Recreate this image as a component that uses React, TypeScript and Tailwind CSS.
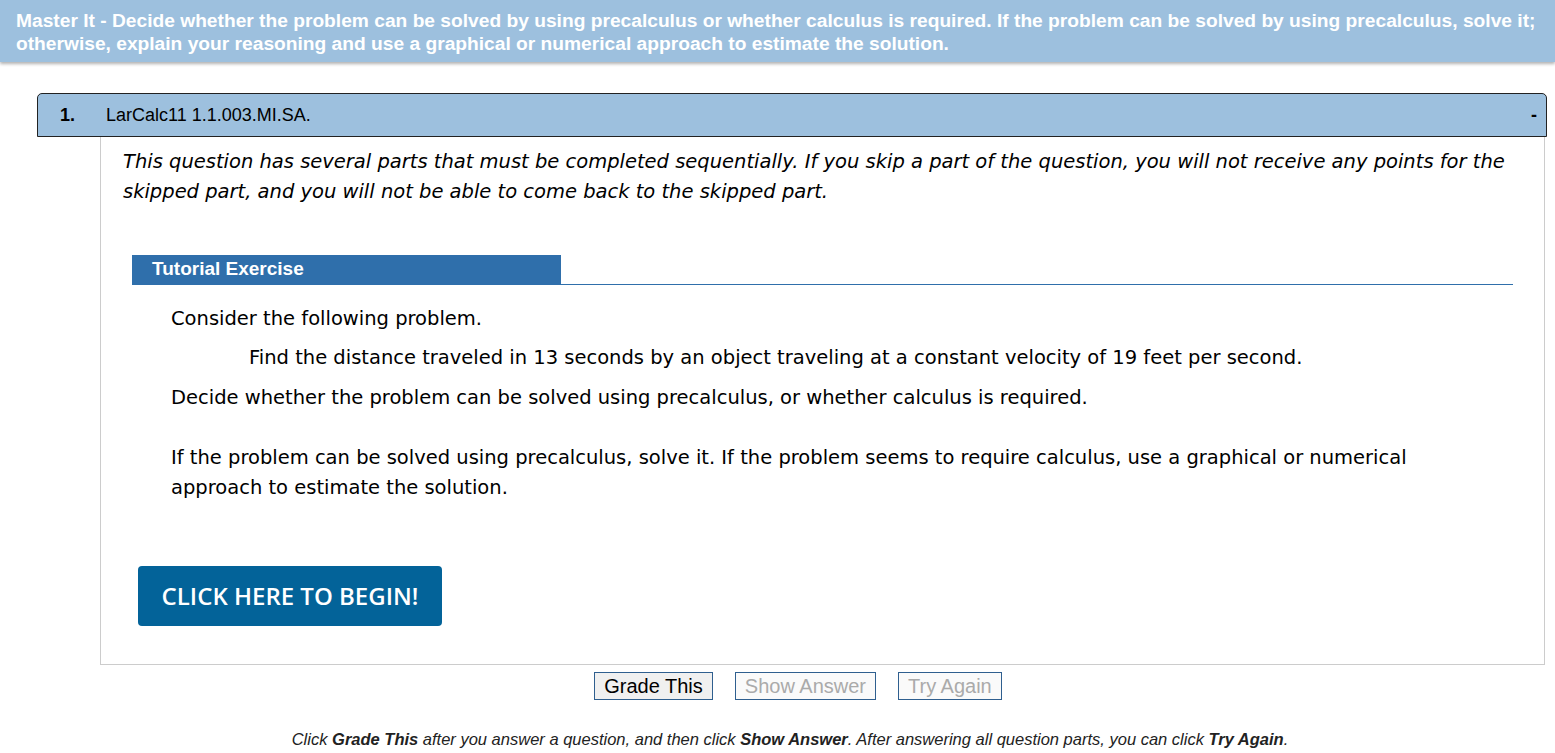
export default function App() {
  const arial = { fontFamily: '"Liberation Sans", Arial, sans-serif' };
  const verdana = { fontFamily: '"DejaVu Sans", Verdana, sans-serif' };
  return (
    <div className="min-h-[753px] bg-white text-black" style={arial}>
      <div className="bg-[#9dc0de] px-4 pt-[9px] pb-[7px] shadow-[0_2px_3px_rgba(0,0,0,0.3)]">
        <p className="text-[19.2px] font-bold leading-[23px] text-white">
          Master It - Decide whether the problem can be solved by using precalculus or whether calculus is required. If the problem can be solved by using precalculus, solve it; otherwise, explain your reasoning and use a graphical or numerical approach to estimate the solution.
        </p>
      </div>

      <div className="ml-[37px] mr-[8px] mt-[31px]">
        <div className="flex h-[44px] items-center rounded-tl-[5px] rounded-tr-[5px] border border-[#222] bg-[#9dc0de] text-[18px]">
          <span className="ml-[22px] w-[46px] font-bold">1.</span>
          <span className="flex-1">LarCalc11 1.1.003.MI.SA.</span>
          <span className="mr-[9px] font-bold">-</span>
        </div>

        <div className="ml-[63px] mr-[2px] border border-t-0 border-[#cccccc] pb-[38px]">
          <p className="px-[22px] pt-[10px] text-[19.5px] italic leading-[30px]" style={verdana}>
            This question has several parts that must be completed sequentially. If you skip a part of the question, you will not receive any points for the skipped part, and you will not be able to come back to the skipped part.
          </p>

          <div className="mx-[31px] mt-[48px]">
            <div className="flex border-b border-[#2f6fab]">
              <div className="flex h-[29px] w-[429px] items-center bg-[#2f6fab] pl-[20px] text-[19px] font-bold text-white">
                Tutorial Exercise
              </div>
            </div>
            <div className="pl-[39px] pt-[19px] text-[19.5px] leading-[30px]" style={verdana}>
              <p>Consider the following problem.</p>
              <p className="mt-[9px] pl-[78px]">
                Find the distance traveled in 13 seconds by an object traveling at a constant velocity of 19 feet per second.
              </p>
              <p className="mt-[10px]">
                Decide whether the problem can be solved using precalculus, or whether calculus is required.
              </p>
              <p className="mt-[30px] pr-[60px]">
                If the problem can be solved using precalculus, solve it. If the problem seems to require calculus, use a graphical or numerical approach to estimate the solution.
              </p>
            </div>
          </div>

          <button
            className="ml-[37px] mt-[63px] h-[60px] w-[304px] rounded-[4px] bg-[#036399] text-[24px] font-semibold text-white"
            style={{ fontFamily: '"Open Sans", sans-serif' }}
          >
            CLICK HERE TO BEGIN!
          </button>
        </div>
      </div>

      <div className="mt-[7px] flex justify-center gap-[22px] pl-[41px]">
        <button className="h-[28px] border border-[#2f5f8f] bg-[#f0f0f0] px-[9px] text-[20px] leading-none text-black">
          Grade This
        </button>
        <button className="h-[28px] border border-[#2f5f8f] bg-[#fafafa] px-[9px] text-[20px] leading-none text-[#aaaaaa]">
          Show Answer
        </button>
        <button className="h-[28px] border border-[#2f5f8f] bg-[#fafafa] px-[9px] text-[20px] leading-none text-[#aaaaaa]">
          Try Again
        </button>
      </div>

      <p className="mt-[27px] pl-[25px] text-center text-[16.5px] italic text-[#222]">
        Click <b>Grade This</b> after you answer a question, and then click <b>Show Answer</b>. After answering all question parts, you can click <b>Try Again</b>.
      </p>
    </div>
  );
}
